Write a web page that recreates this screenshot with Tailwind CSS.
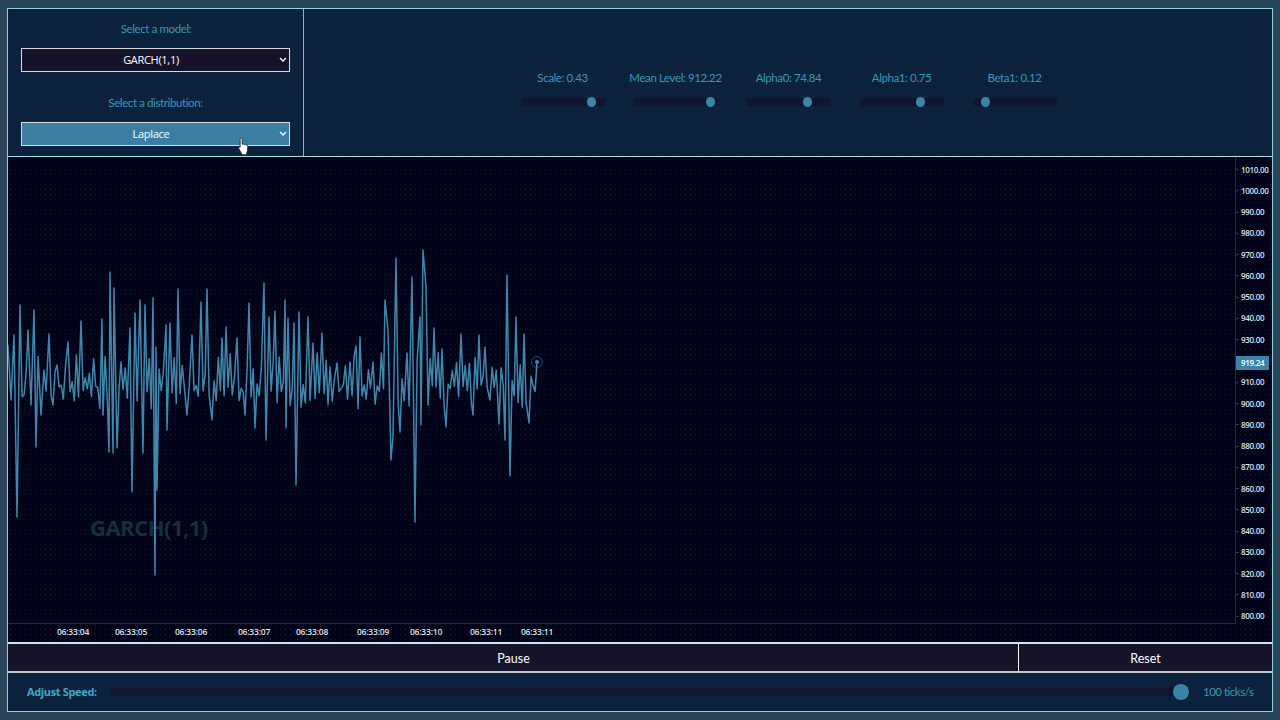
<!DOCTYPE html>
<html lang="en">
  <head>
    <meta charset="UTF-8" />
    <meta name="viewport" content="width=device-width, initial-scale=1.0" />
    <title>GARCH simulator</title>
    <script src="https://cdn.jsdelivr.net/npm/@tailwindcss/browser@4"></script>
  </head>
  <body class="h-screen overflow-hidden bg-[#2a4558] px-[7px] pt-[8px] font-['Open_Sans',sans-serif]">
    <div class="relative flex h-[704px] flex-col border border-[#8fd4e2]">
      <!-- top panel -->
      <div class="flex h-[148px] border-b border-[#a8e4ec] bg-[#0b213c]">
        <div class="flex w-[296px] flex-col items-center border-r border-[#6fc0d2] pt-[12px] font-['Lato',sans-serif] text-[11.500px] leading-[16px] tracking-[-0.4px] text-[#3d98b8]">
          <label class="pl-px">Select a model:</label>
          <div class="relative mt-[11px] h-[24px] w-[269px] font-['Open_Sans',sans-serif] tracking-[-0.3px]">
            <select class="h-full w-full appearance-none rounded-none border border-[#d8dde0] bg-[#15122a] pr-[9px] text-center text-[11px] text-white">
              <option>GARCH(1,1)</option>
            </select>
            <svg class="absolute right-[3px] top-[9px]" width="8" height="6" viewBox="0 0 8 6" fill="none" stroke="#fff" stroke-width="1.3"><path d="M1 1l3 3 3-3" /></svg>
          </div>
          <label class="mt-[23px]">Select a distribution:</label>
          <div class="relative mt-[11px] h-[24px] w-[269px] font-['Open_Sans',sans-serif] tracking-[-0.3px]">
            <select class="h-full w-full appearance-none rounded-none border border-[#d8dde0] bg-[#3a7fa3] pr-[9px] text-center text-[11px] text-white">
              <option>Laplace</option>
            </select>
            <svg class="absolute right-[3px] top-[9px]" width="8" height="6" viewBox="0 0 8 6" fill="none" stroke="#fff" stroke-width="1.3"><path d="M1 1l3 3 3-3" /></svg>
          </div>
        </div>

        <div class="flex flex-1 items-center justify-center gap-[29px] pl-px pt-[10px] font-['Lato',sans-serif] text-[11.500px] tracking-[-0.4px] text-[#3d98b8]">
          <div class="flex w-[84px] flex-col items-center gap-[11px]">
            <span class="whitespace-nowrap leading-[18px]">Scale: 0.43</span>
            <input type="range" value="88" class="h-[8px] w-full appearance-none rounded-[2px] bg-[#11152e] [&::-webkit-slider-thumb]:h-[10px] [&::-webkit-slider-thumb]:w-[9px] [&::-webkit-slider-thumb]:appearance-none [&::-webkit-slider-thumb]:rounded-full [&::-webkit-slider-thumb]:bg-[#3a84a8]" />
          </div>
          <div class="flex w-[84px] flex-col items-center gap-[11px]">
            <span class="whitespace-nowrap leading-[18px]">Mean Level: 912.22</span>
            <input type="range" value="97" class="h-[8px] w-full appearance-none rounded-[2px] bg-[#11152e] [&::-webkit-slider-thumb]:h-[10px] [&::-webkit-slider-thumb]:w-[9px] [&::-webkit-slider-thumb]:appearance-none [&::-webkit-slider-thumb]:rounded-full [&::-webkit-slider-thumb]:bg-[#3a84a8]" />
          </div>
          <div class="flex w-[84px] flex-col items-center gap-[11px]">
            <span class="whitespace-nowrap leading-[18px]">Alpha0: 74.84</span>
            <input type="range" value="75" class="h-[8px] w-full appearance-none rounded-[2px] bg-[#11152e] [&::-webkit-slider-thumb]:h-[10px] [&::-webkit-slider-thumb]:w-[9px] [&::-webkit-slider-thumb]:appearance-none [&::-webkit-slider-thumb]:rounded-full [&::-webkit-slider-thumb]:bg-[#3a84a8]" />
          </div>
          <div class="flex w-[84px] flex-col items-center gap-[11px]">
            <span class="whitespace-nowrap leading-[18px]">Alpha1: 0.75</span>
            <input type="range" value="75" class="h-[8px] w-full appearance-none rounded-[2px] bg-[#11152e] [&::-webkit-slider-thumb]:h-[10px] [&::-webkit-slider-thumb]:w-[9px] [&::-webkit-slider-thumb]:appearance-none [&::-webkit-slider-thumb]:rounded-full [&::-webkit-slider-thumb]:bg-[#3a84a8]" />
          </div>
          <div class="flex w-[84px] flex-col items-center gap-[11px]">
            <span class="whitespace-nowrap leading-[18px]">Beta1: 0.12</span>
            <input type="range" value="11" class="h-[8px] w-full appearance-none rounded-[2px] bg-[#11152e] [&::-webkit-slider-thumb]:h-[10px] [&::-webkit-slider-thumb]:w-[9px] [&::-webkit-slider-thumb]:appearance-none [&::-webkit-slider-thumb]:rounded-full [&::-webkit-slider-thumb]:bg-[#3a84a8]" />
          </div>
        </div>
      </div>

      <!-- chart -->
      <div class="relative flex h-[485px] bg-[#020219] bg-[radial-gradient(#08202a_0.5px,transparent_0.7px)] bg-[size:5px_5px]">
        <div class="relative mb-[18px] flex-1 border-b border-r border-[#1e3044]">
          <div class="absolute left-[82px] top-[355px] text-[22px] font-bold leading-[30px] tracking-[-0.5px] text-[#142f40]">GARCH(1,1)</div>
          <svg class="absolute left-0 top-0" width="1265" height="484" viewBox="8 157 1265 484" fill="none">
            <polyline id="series" stroke="#3f88ac" stroke-width="1.5" stroke-linejoin="round" />
            <circle cx="537" cy="362" r="5.5" stroke="#3f88ac" stroke-opacity="0.55" />
            <circle cx="537" cy="362" r="2" fill="#3f88ac" />
          </svg>
        </div>
        <div id="yAxis" class="flex w-[36px] flex-col pt-[2px] text-[8px] font-semibold tracking-[-0.3px] text-[#dfe4e8]"></div>
        <div class="absolute left-[1228px] top-[199px] flex h-[14px] w-[33px] items-center bg-[#3a84a8] pl-[5px] text-[8px] font-semibold tracking-[-0.3px] text-white">919.24</div>
        <div id="xAxis" class="absolute left-0 top-[469px] text-[8.500px] font-semibold leading-[12px] tracking-[-0.2px] text-[#dfe4e8]"></div>
      </div>

      <!-- buttons -->
      <div class="flex h-[31px] border-y-2 border-b-[#c2c8cc] border-t-[#c8e8ee] bg-[#15132a] font-['Lato',sans-serif] text-[12.500px] text-white">
        <button class="flex-1 border-r border-white pt-[3px] pl-px">Pause</button>
        <button class="w-[253px] pt-[3px]">Reset</button>
      </div>

      <!-- speed -->
      <div class="flex flex-1 items-center bg-[#0b213c] pl-[19px]">
        <label class="w-[83px] text-[11px] font-bold tracking-[-0.35px] text-[#3fa9c6]">Adjust Speed:</label>
        <input type="range" value="100" class="h-[8px] w-[1079px] appearance-none rounded-[2px] bg-[#11152e] [&::-webkit-slider-thumb]:size-[16px] [&::-webkit-slider-thumb]:appearance-none [&::-webkit-slider-thumb]:rounded-full [&::-webkit-slider-thumb]:bg-[#3a84a8]" />
        <span class="ml-[14px] whitespace-nowrap font-['Lato',sans-serif] text-[11.500px] tracking-[-0.5px] text-[#3d98b8]">100 ticks/s</span>
      </div>

      <!-- mouse pointer from the capture -->
      <svg class="absolute left-[229px] top-[128px]" width="13" height="19" viewBox="0 0 12 18">
        <path d="M3 1.2c.8-.6 1.700 0 1.700 1V7c.6-.5 1.500-.4 1.900.2.600-.4 1.400-.2 1.700.4.700-.3 1.400.1 1.500.8.300 2 .2 4.200-.5 6l-.6 2.400H4.700L1.500 11c-.5-.9.500-1.900 1.300-1.200V2.200c0-.4 0-.8.200-1z" fill="#fff" stroke="#222" stroke-width="0.8" />
      </svg>
    </div>

    <script>
      // peaks and troughs of the series, read off the capture
      const anchors = [
        [8, 345], [11, 400], [14, 335], [17, 517], [20, 305], [24, 395], [28, 330], [31, 405], [34, 310], [36, 447], [41, 415],
        [44, 370], [49, 334], [53, 405], [57, 365], [68, 342], [81, 321], [102, 319], [103, 415], [109, 452], [110, 272],
        [113, 453], [114, 288], [117, 448], [121, 362], [130, 328], [132, 492], [135, 313], [140, 300], [143, 453], [145, 305],
        [153, 298], [155, 575], [156, 347], [157, 490], [166, 325], [167, 430], [170, 323], [178, 289], [187, 415], [192, 335],
        [201, 302], [207, 289], [212, 420], [222, 338], [226, 327], [237, 338], [245, 415], [249, 303], [255, 428], [264, 283],
        [266, 440], [269, 317], [275, 311], [285, 300], [286, 428], [288, 318], [294, 323], [296, 485], [299, 312], [308, 317],
        [313, 343], [322, 333], [328, 405], [337, 363], [350, 362], [356, 346], [360, 337], [373, 362], [385, 300], [388, 330],
        [391, 460], [393, 436], [396, 258], [400, 432], [407, 353], [412, 277], [415, 522], [420, 317], [421, 425], [423, 250],
        [426, 287], [434, 328], [442, 349], [446, 427], [461, 334], [473, 415], [479, 335], [485, 347], [490, 400], [499, 424],
        [505, 440], [507, 275], [510, 476], [516, 317], [524, 334], [529, 423], [533, 385], [537, 362],
      ];

      // small deterministic noise to fill the gaps between anchors
      let seed = 7;
      const rnd = () => {
        seed = (seed * 9301 + 49297) % 233280;
        return seed / 233280;
      };

      const points = [];
      anchors.forEach(([x, y], i) => {
        points.push(`${x},${y}`);
        const next = anchors[i + 1];
        if (!next) return;
        let up = y > 390;
        for (let px = x + 2.1; px < next[0] - 1.2; px += 2.1) {
          const py = up ? 352 + rnd() * 38 : 385 + rnd() * 24;
          points.push(`${px.toFixed(1)},${py.toFixed(1)}`);
          up = !up;
        }
      });
      document.getElementById("series").setAttribute("points", points.join(" "));

      const yAxis = document.getElementById("yAxis");
      for (let v = 1010; v >= 800; v -= 10) {
        const label = v === 920 ? "" : `${v}.00`;
        yAxis.innerHTML += `<div class="flex h-[21.28px] items-center"><span class="h-px w-[3px] bg-[#2a3c50]"></span><span class="ml-[2px]">${label}</span></div>`;
      }

      const xAxis = document.getElementById("xAxis");
      const times = [
        [65, "06:33:04"], [123, "06:33:05"], [183, "06:33:06"], [246, "06:33:07"], [304, "06:33:08"],
        [365, "06:33:09"], [418, "06:33:10"], [478, "06:33:11"], [529, "06:33:11"],
      ];
      times.forEach(([x, t]) => {
        xAxis.innerHTML += `<span class="absolute -translate-x-1/2" style="left:${x}px">${t}</span>`;
      });
    </script>
  </body>
</html>
